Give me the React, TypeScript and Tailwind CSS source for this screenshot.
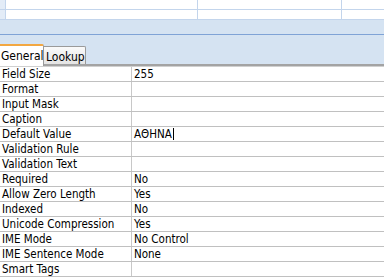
import React from 'react';

const rows: [string, string][] = [
    ['Field Size', '255'],
    ['Format', ''],
    ['Input Mask', ''],
    ['Caption', ''],
    ['Default Value', 'ΑΘΗΝΑ'],
    ['Validation Rule', ''],
    ['Validation Text', ''],
    ['Required', 'No'],
    ['Allow Zero Length', 'Yes'],
    ['Indexed', 'No'],
    ['Unicode Compression', 'Yes'],
    ['IME Mode', 'No Control'],
    ['IME Sentence Mode', 'None'],
    ['Smart Tags', ''],
];

const App: React.FC = () => {
    return (
        <div className="w-[384px] h-[280px] overflow-hidden bg-[#d5e3f2] text-[11.5px] text-black font-['DejaVu_Sans_Condensed','DejaVu_Sans',sans-serif] flex flex-col">
            {/* Datasheet rows above */}
            <div className="h-[20px] bg-white flex flex-col">
                {[0, 1].map((r) => (
                    <div key={r} className="h-[10px] grid grid-cols-[6px_192px_144px_1fr] border-b border-[#c3d5ec]">
                        <div className="bg-[#e3ecf7] border-r border-[#c3d5ec]" />
                        <div className="border-r border-[#c3d5ec]" />
                        <div className="border-r border-[#c3d5ec]" />
                        <div />
                    </div>
                ))}
            </div>

            {/* Splitter */}
            <div className="h-[14px]" />
            <div className="h-px bg-[#7fa3d6]" />
            <div className="h-[9px]" />

            {/* Tabs */}
            <div className="h-[22px] flex items-end border-b-2 border-[#a3a3a3] relative">
                <div className="h-[22px] w-[44px] bg-white border-t-2 border-[#f2a742] border-r border-r-[#9a9a9a] -mb-[2px] relative z-10 flex items-start pt-[1px] pl-[1px] text-[12px] rounded-tr-[2px] whitespace-nowrap">
                    General
                </div>
                <div className="h-[18px] w-[42px] bg-gradient-to-b from-[#fafafa] to-[#e4e4e4] border border-[#9a9a9a] border-b-0 border-l-0 flex items-start pt-[1px] pl-[2px] text-[12px] rounded-tr-[2px] whitespace-nowrap">
                    Lookup
                </div>
            </div>

            {/* Property grid */}
            <div className="bg-white border-t border-[#d0d0d0] flex-1">
                {rows.map(([label, value]) => (
                    <div key={label} className="h-[15px] grid grid-cols-[132px_1fr] border-b border-[#c0c0c0]">
                        <div className="border-r border-[#c8c8c8] pl-[2px] leading-[14px] whitespace-nowrap">{label}</div>
                        <div className="pl-[2px] leading-[14px] whitespace-nowrap flex items-center">
                            {value}
                            {label === 'Default Value' && <span className="inline-block w-px h-[12px] bg-black ml-px" />}
                        </div>
                    </div>
                ))}
            </div>
        </div>
    );
};

export default App;
